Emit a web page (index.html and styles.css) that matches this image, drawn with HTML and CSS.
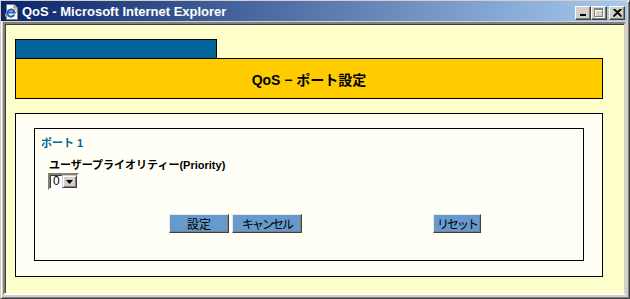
FILE: index.html
```html
<!DOCTYPE html>
<html lang="ja">
<head>
  <meta charset="UTF-8" />
  <title>QoS - Microsoft Internet Explorer</title>
  <link rel="stylesheet" href="styles.css">
</head>
<body>

  <div class="window">
    <div class="titlebar">
      <svg class="app-icon" width="16" height="16" viewBox="0 0 16 16">
        <path d="M2.5 0.5 H10 L13.5 4 V15.5 H2.5 Z" fill="#fff" stroke="#808080"/>
        <path d="M10 0.5 V4 H13.5" fill="#d4d0c8" stroke="#808080"/>
        <ellipse cx="7" cy="9" rx="6" ry="2.6" fill="none" stroke="#f0c040" stroke-width="1" transform="rotate(-30 7 9)"/>
        <path d="M10.2 10.8 A3.6 3.6 0 1 1 10.6 8.6 H4.6" fill="none" stroke="#1a5fd0" stroke-width="2"/>
      </svg>
      <div class="title-text">QoS - Microsoft Internet Explorer</div>
      <div class="win-buttons">
        <div class="win-btn">
          <svg width="8" height="7" viewBox="0 0 8 7"><rect x="1" y="5" width="6" height="2" fill="#000"/></svg>
        </div>
        <div class="win-btn">
          <svg width="10" height="10" viewBox="0 0 10 10">
            <path d="M1.5 1.5 H9.5 V9.5 H1.5 Z M1.5 2.5 H9.5" fill="none" stroke="#fff"/>
            <path d="M0.5 0.5 H8.5 V8.5 H0.5 Z M0.5 1.5 H8.5" fill="none" stroke="#808080"/>
          </svg>
        </div>
        <div class="win-btn close-btn">
          <svg width="9" height="8" viewBox="0 0 9 8">
            <path d="M0.5 0 L8.5 8 M1.5 0 L8.5 7 M8.5 0 L0.5 8 M7.5 0 L0.5 7" stroke="#000" stroke-width="1.2"/>
          </svg>
        </div>
      </div>
    </div>

    <div class="client">
      <div class="tab"></div>
      <div class="page-header">QoS − ポート設定</div>

      <div class="panel">
        <div class="port-box">
          <div class="port-label">ポート 1</div>
          <div class="field">
            <div class="field-label">ユーザープライオリティー(Priority)</div>
            <div class="select">
              <span class="select-value">0</span>
              <span class="select-btn">
                <svg width="7" height="4" viewBox="0 0 7 4"><path d="M0 0 H7 L3.5 4 Z" fill="#000"/></svg>
              </span>
            </div>
          </div>
          <div class="button-row">
            <button class="btn btn-set">設定</button>
            <button class="btn btn-cancel">キャンセル</button>
            <button class="btn btn-reset">リセット</button>
          </div>
        </div>
      </div>
    </div>
  </div>

</body>
</html>
```

FILE: styles.css
```css
:root {
  --face: #d4d0c8;
  --shadow: #808080;
  --dark: #404040;
  --page: #ffffcc;
  --panel: #fffff5;
  --blue: #006699;
  --yellow: #ffcc00;
  --button: #6699cc;
}

* {
  margin: 0;
  padding: 0;
  box-sizing: border-box;
}

html, body {
  width: 630px;
  height: 299px;
  overflow: hidden;
  font-family: "Liberation Sans", "Noto Sans CJK JP", sans-serif;
}

.window {
  width: 630px;
  height: 299px;
  display: flex;
  flex-direction: column;
  background: var(--face);
  border: 1px solid;
  border-color: var(--face) var(--dark) var(--dark) var(--face);
  box-shadow: inset 1px 1px #fff, inset -1px -1px var(--shadow);
  padding: 0 2px 3px 0;
}

.titlebar {
  height: 20px;
  display: flex;
  align-items: center;
  background: linear-gradient(to right, #0a246a, #a6caf0);
  padding: 0 2px 0 3px;
}

.app-icon {
  flex: none;
  margin-top: 1px;
}

.title-text {
  flex: 1;
  margin-left: 2px;
  color: #fff;
  font-size: 13px;
  font-weight: bold;
  white-space: nowrap;
}

.win-buttons {
  display: flex;
  margin-top: 3px;
}

.win-btn {
  width: 16px;
  height: 14px;
  display: flex;
  align-items: center;
  justify-content: center;
  background: var(--face);
  border: 1px solid;
  border-color: #fff var(--dark) var(--dark) #fff;
  box-shadow: inset -1px -1px var(--shadow);
}

.close-btn {
  margin-left: 2px;
}

.client {
  flex: 1;
  margin: 1px 1px 0 2px;
  border: 2px solid;
  border-color: var(--shadow) var(--face) #fff var(--shadow);
  box-shadow: inset 1px 1px var(--dark);
  background: var(--page);
  padding: 15px 21px 0 10px;
}

.tab {
  width: 202px;
  height: 19px;
  background: var(--blue);
  border: 1px solid #000;
  border-bottom: none;
}

.page-header {
  height: 41px;
  display: flex;
  align-items: center;
  justify-content: center;
  background: var(--yellow);
  border: 1px solid #000;
  font-size: 14px;
  font-weight: bold;
  color: #000;
}

.panel {
  margin-top: 14px;
  height: 164px;
  background: var(--panel);
  border: 1px solid #000;
  padding: 14px 18px 0 18px;
}

.port-box {
  height: 133px;
  border: 1px solid #000;
  padding: 8px 6px 0 6px;
}

.port-label {
  font-size: 11px;
  line-height: 13px;
  font-weight: bold;
  color: var(--blue);
}

.field {
  margin-top: 9px;
  padding-left: 8px;
}

.field-label {
  font-size: 11px;
  line-height: 13px;
  font-weight: bold;
  color: #000;
}

.select {
  margin-top: 1px;
  margin-left: -1px;
  width: 31px;
  height: 17px;
  display: flex;
  background: #fff;
  border: 2px solid;
  border-color: var(--shadow) #fff #fff var(--shadow);
  box-shadow: inset 1px 1px var(--dark);
}

.select-value {
  flex: 1;
  font-size: 12px;
  line-height: 13px;
  padding-left: 3px;
}

.select-btn {
  width: 15px;
  display: flex;
  align-items: center;
  justify-content: center;
  background: var(--face);
  border: 1px solid;
  border-color: var(--face) var(--dark) var(--dark) var(--face);
  box-shadow: inset 1px 1px #fff, inset -1px -1px var(--shadow);
}

.button-row {
  display: flex;
  margin-top: 24px;
  padding-left: 128px;
}

.btn {
  height: 19px;
  padding: 0;
  white-space: nowrap;
  background: var(--button);
  border: 1px solid;
  border-color: #e8e8e8 var(--dark) var(--dark) #e8e8e8;
  box-shadow: inset -1px -1px var(--shadow);
  font-family: "Noto Sans CJK JP", sans-serif;
  font-size: 12px;
  line-height: 15px;
  color: #000;
}

.btn-set { width: 60px; }

.btn-cancel {
  width: 70px;
  margin-left: 3px;
  letter-spacing: -2px;
}

.btn-reset {
  width: 48px;
  margin-left: 131px;
  letter-spacing: -2px;
}
```
